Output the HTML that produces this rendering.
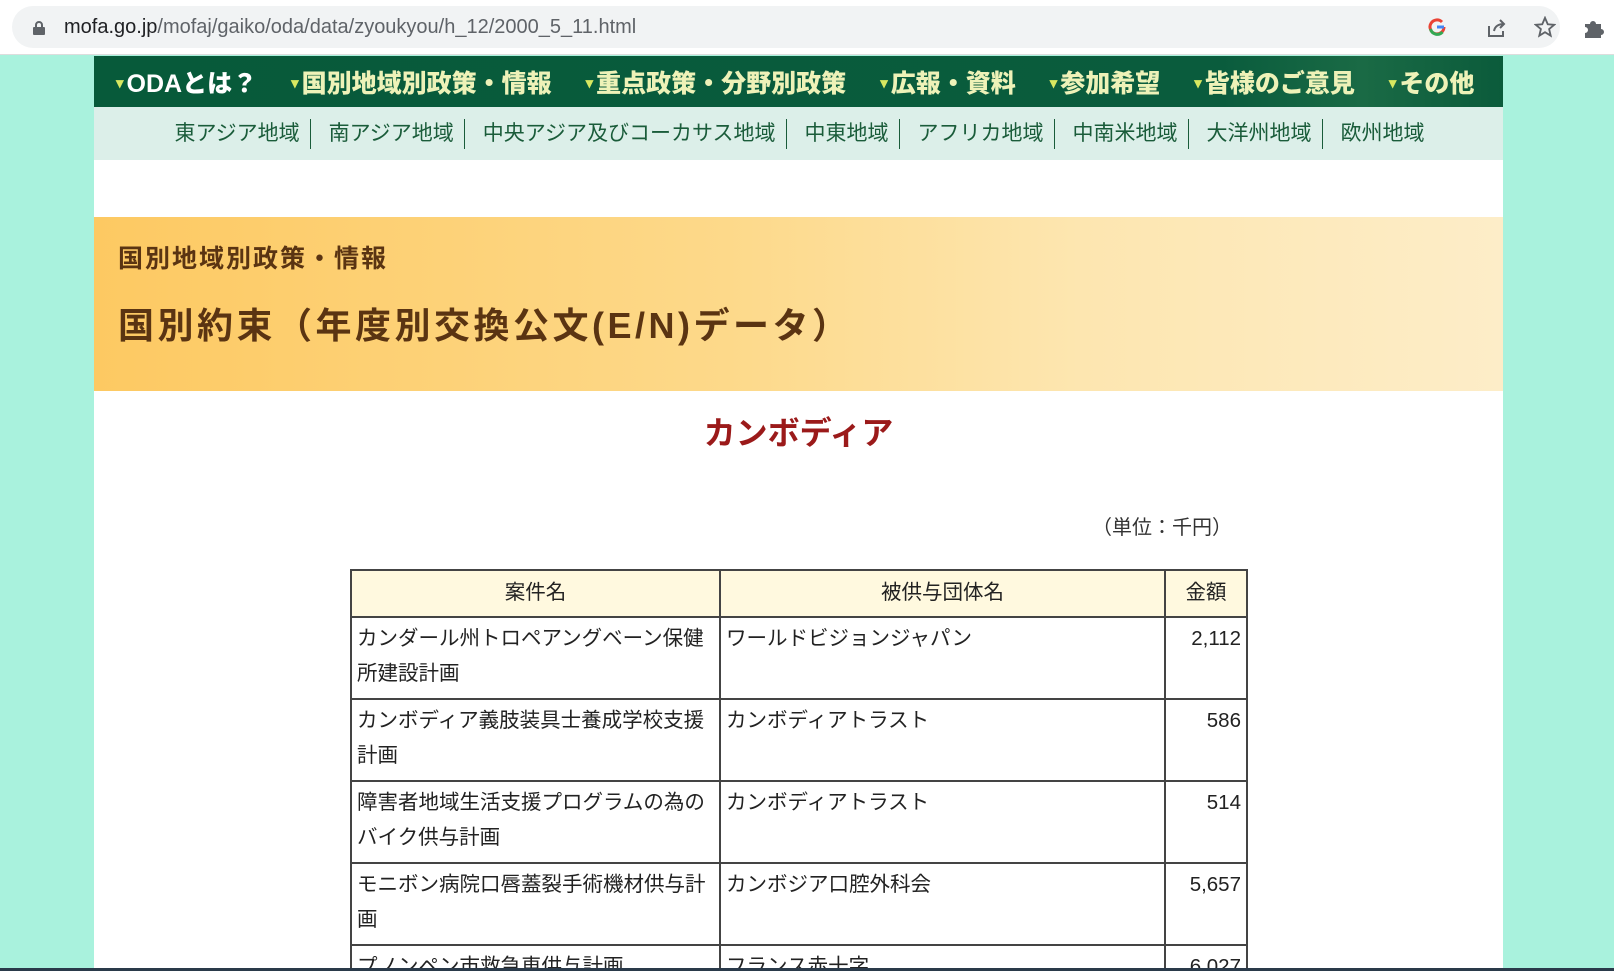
<!DOCTYPE html>
<html style="width:1614px;height:971px;overflow:hidden"><head><meta charset="utf-8"><style>
*{margin:0;padding:0;box-sizing:border-box}
body{width:1614px;height:971px;overflow:hidden;background:#a9f2dd;font-family:"Liberation Sans","Noto Sans CJK JP",sans-serif;position:relative}
.top{position:absolute;left:0;top:0;width:1614px;height:55px;background:#fff;border-bottom:1px solid #ddd}
.url{position:absolute;left:12px;top:6px;width:1548px;height:42px;background:#f1f3f4;border-radius:21px}
.url span{position:absolute;left:52px;top:10px;font-size:20px;color:#202124}
.url span i{font-style:normal;color:#5f6368}
.lock{position:absolute;left:21px;top:15px;width:12px;height:14px}
.page{position:absolute;left:94px;top:56px;width:1409px;height:912px;background:#fff;overflow:hidden}
.nav{height:51px;background:linear-gradient(90deg,#075a3a,#0a5c3d 80%,#1a6a45 90%,#0b5b3b);display:flex;align-items:center;padding-left:22px;font-weight:bold;font-size:25px;color:#fff;white-space:nowrap}
.nav b{margin-right:34px}
.nav b:before{content:"▾";color:#d8e860;font-size:15px;margin-right:3px;vertical-align:4px}
.nav b.y{color:#eef2b8}
.sub{height:53px;background:#dcefe9;display:flex;align-items:center;justify-content:center;font-size:21px;color:#1a5c3a;padding-left:12px}
.sub span{padding:0 10px 0 18px;border-right:1px solid #1a5c3a;line-height:30px}
.sub span:first-child{padding-left:0}
.sub span:last-child{border:none}
.ban{position:absolute;top:161px;left:0;width:1409px;height:174px;background:linear-gradient(90deg,#fdc962,#fdd98a 45%,#fde6b0 70%,#fdedc8);color:#5a3412;font-weight:bold}
.ban .a{position:absolute;left:24px;top:22px;font-size:25px;letter-spacing:2px}
.ban .b{position:absolute;left:24px;top:80px;font-size:36px;letter-spacing:3.5px}
h1{position:absolute;top:352px;left:0;width:1409px;text-align:center;color:#9b1a1a;font-size:32px}
.unit{position:absolute;top:455px;right:271px;font-size:20px;color:#333}
.tw{position:absolute;left:256px;top:513px;width:900px;height:399px;overflow:hidden}
table{border-collapse:collapse;font-size:20.5px;color:#222;width:898px}
td,th{border:2px solid #444;vertical-align:top;padding:3px 5px;line-height:35px;font-weight:normal}
th{background:#fff9df;text-align:center;padding:4px 6px;height:47px}
td.n{text-align:right}
tr.r td{height:82px}
</style></head><body>
<div class="top"><div class="url"><svg class="lock" viewBox="0 0 12 14"><rect x="0" y="6" width="12" height="8" rx="1" fill="#5f6368"/><path d="M3 6V4a3 3 0 016 0v2" stroke="#5f6368" stroke-width="2" fill="none"/></svg><span>mofa.go.jp<i>/mofaj/gaiko/oda/data/zyoukyou/h_12/2000_5_11.html</i></span>
<svg style="position:absolute;left:1415px;top:11px" width="20" height="20" viewBox="0 0 20 20"><path d="M17 10a7 7 0 11-2-5" stroke="#ea4335" stroke-width="3" fill="none"/><path d="M10 10h7" stroke="#4285f4" stroke-width="3"/><path d="M3.5 12a7 7 0 0012 3" stroke="#34a853" stroke-width="3" fill="none"/></svg>
<svg style="position:absolute;left:1474px;top:11px" width="22" height="22" viewBox="0 0 22 22"><path d="M3 9v10h14v-5M8 14c1-5 5-7 10-7M14 3l4 4-4 4" stroke="#5f6368" stroke-width="2" fill="none"/></svg>
<svg style="position:absolute;left:1522px;top:10px" width="22" height="22" viewBox="0 0 24 24"><path d="M12 2l3 7 7 .6-5.5 4.7 1.7 7.2L12 17.7 5.8 21.5l1.7-7.2L2 9.6 9 9z" stroke="#5f6368" stroke-width="2" fill="none"/></svg></div>
<svg style="position:absolute;left:1583px;top:16px" width="22" height="22" viewBox="0 0 22 22"><path d="M2 8h5a3 3 0 016 0h5v5a3 3 0 010 6v3H2v-5a3 3 0 000-6z" fill="#5f6368"/></svg></div>
<div class="page">
<div class="nav"><b>ODAとは？</b><b class="y">国別地域別政策・情報</b><b class="y">重点政策・分野別政策</b><b class="y">広報・資料</b><b class="y">参加希望</b><b class="y">皆様のご意見</b><b class="y">その他</b></div>
<div class="sub"><span>東アジア地域</span><span>南アジア地域</span><span>中央アジア及びコーカサス地域</span><span>中東地域</span><span>アフリカ地域</span><span>中南米地域</span><span>大洋州地域</span><span>欧州地域</span></div>
<div class="ban"><div class="a">国別地域別政策・情報</div><div class="b">国別約束（年度別交換公文(E/N)データ）</div></div>
<h1>カンボディア</h1>
<div class="unit">（単位：千円）</div>
<div class="tw"><table>
<tr><th style="width:369px">案件名</th><th style="width:445px">被供与団体名</th><th>金額</th></tr>
<tr class="r"><td>カンダール州トロペアングベーン保健所建設計画</td><td>ワールドビジョンジャパン</td><td class="n">2,112</td></tr>
<tr class="r"><td>カンボディア義肢装具士養成学校支援計画</td><td>カンボディアトラスト</td><td class="n">586</td></tr>
<tr class="r"><td>障害者地域生活支援プログラムの為のバイク供与計画</td><td>カンボディアトラスト</td><td class="n">514</td></tr>
<tr class="r"><td>モニボン病院口唇蓋裂手術機材供与計画</td><td>カンボジア口腔外科会</td><td class="n">5,657</td></tr>
<tr><td style="height:40px">プノンペン市救急車供与計画</td><td>フランス赤十字</td><td class="n">6,027</td></tr>
</table></div>
</div>
<div style="position:absolute;left:0;top:968px;width:1614px;height:3px;background:#2a3a4a"></div>
</body></html>
